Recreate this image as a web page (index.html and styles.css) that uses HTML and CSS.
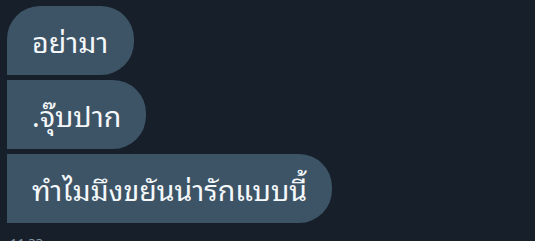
FILE: index.html
```html
<!DOCTYPE html>
<html>
<head>
    <meta charset="UTF-8">
    <title>DM</title>
    <link rel="stylesheet" href="styles.css">
</head>
<body>
    <div class="thread">
        <div class="message-group">
            <div class="bubble first">อย่ามา</div>
            <div class="bubble">.จุ๊บปาก</div>
            <div class="bubble last">ทำไมมึงขยันน่ารักแบบนี้</div>
        </div>
        <div class="time">11:33 น.</div>
    </div>
</body>
</html>
```

FILE: styles.css
```css
* {
    margin: 0;
    padding: 0;
    box-sizing: border-box;
}

body {
    font-family: "Noto Sans Thai Looped", "Noto Sans Thai", Tahoma, "Noto Sans", sans-serif;
    background: #17202a;
    height: 100vh;
    overflow: hidden;
}

.thread {
    padding: 6px 7px;
}

.message-group {
    display: flex;
    flex-direction: column;
    align-items: flex-start;
    gap: 5px;
}

.bubble {
    background: #3d5466;
    color: #f5f8fa;
    font-size: 28.5px;
    line-height: 69px;
    height: 69px;
    padding: 0 25px 0 25px;
    border-radius: 0 33px 33px 0;
    white-space: nowrap;
}

.bubble.first {
    border-top-left-radius: 33px;
    padding-right: 26px;
}

.time {
    margin-top: 9px;
    padding-left: 3px;
    font-size: 13px;
    color: #8899a6;
}
```
